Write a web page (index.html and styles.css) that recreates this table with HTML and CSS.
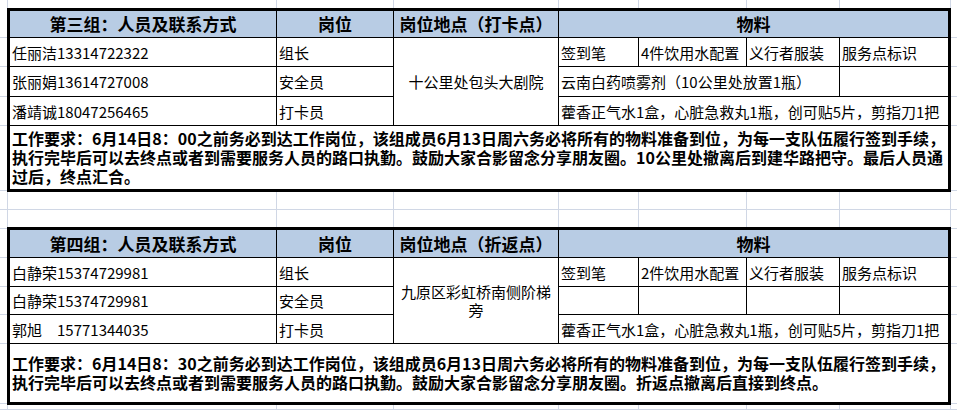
FILE: index.html
```html
<!DOCTYPE html>
<html lang="zh-CN">
<head>
<meta charset="utf-8">
<title>分组表</title>
<link rel="stylesheet" href="styles.css">
</head>
<body>
<div class="sheet">
  <div class="tbl tbl-a">
    <div class="c h">第三组：人员及联系方式</div>
    <div class="c h">岗位</div>
    <div class="c h">岗位地点（打卡点）</div>
    <div class="c h span4">物料</div>

    <div class="c">任丽洁13314722322</div>
    <div class="c">组长</div>
    <div class="c loc rows3">十公里处包头大剧院</div>
    <div class="c">签到笔</div>
    <div class="c">4件饮用水配置</div>
    <div class="c">义行者服装</div>
    <div class="c">服务点标识</div>

    <div class="c">张丽娟13614727008</div>
    <div class="c">安全员</div>
    <div class="c span3">云南白药喷雾剂（10公里处放置1瓶）</div>
    <div class="c"></div>

    <div class="c">潘靖诚18047256465</div>
    <div class="c">打卡员</div>
    <div class="c span4">藿香正气水1盒，心脏急救丸1瓶，创可贴5片，剪指刀1把</div>

    <div class="c req span7">
      <p class="line">工作要求：6月14日8：00之前务必到达工作岗位，该组成员6月13日周六务必将所有的物料准备到位，为每一支队伍履行签到手续，</p>
      <p class="line">执行完毕后可以去终点或者到需要服务人员的路口执勤。鼓励大家合影留念分享朋友圈。10公里处撤离后到建华路把守。最后人员通</p>
      <p class="line">过后，终点汇合。</p>
    </div>
  </div>

  <div class="tbl tbl-b">
    <div class="c h">第四组：人员及联系方式</div>
    <div class="c h">岗位</div>
    <div class="c h">岗位地点（折返点）</div>
    <div class="c h span4">物料</div>

    <div class="c">白静荣15374729981</div>
    <div class="c">组长</div>
    <div class="c loc rows3">九原区彩虹桥南侧阶梯<br>旁</div>
    <div class="c">签到笔</div>
    <div class="c">2件饮用水配置</div>
    <div class="c">义行者服装</div>
    <div class="c">服务点标识</div>

    <div class="c">白静荣15374729981</div>
    <div class="c">安全员</div>
    <div class="c"></div>
    <div class="c"></div>
    <div class="c"></div>
    <div class="c"></div>

    <div class="c">郭旭&ensp;&ensp;15771344035</div>
    <div class="c">打卡员</div>
    <div class="c span4">藿香正气水1盒，心脏急救丸1瓶，创可贴5片，剪指刀1把</div>

    <div class="c req span7">
      <p class="line">工作要求：6月14日8：30之前务必到达工作岗位，该组成员6月13日周六务必将所有的物料准备到位，为每一支队伍履行签到手续，</p>
      <p class="line">执行完毕后可以去终点或者到需要服务人员的路口执勤。鼓励大家合影留念分享朋友圈。折返点撤离后直接到终点。</p>
    </div>
  </div>
</div>
</body>
</html>
```

FILE: styles.css
```css
html, body {
  margin: 0;
  padding: 0;
  background: #ffffff;
}

.sheet {
  width: 957px;
  height: 410px;
  box-sizing: border-box;
  padding: 8px 0 0 7px;
  overflow: hidden;
  font-family: "Noto Sans CJK SC", "Noto Sans", sans-serif;
  color: #000;
  background-color: #ffffff;
  background-image:
    linear-gradient(#d0d7e5, #d0d7e5),
    linear-gradient(#d0d7e5, #d0d7e5),
    linear-gradient(#d0d7e5, #d0d7e5),
    linear-gradient(#d0d7e5, #d0d7e5),
    linear-gradient(#d0d7e5, #d0d7e5),
    linear-gradient(#d0d7e5, #d0d7e5),
    linear-gradient(#d0d7e5, #d0d7e5),
    linear-gradient(#d0d7e5, #d0d7e5),
    linear-gradient(#d0d7e5, #d0d7e5),
    linear-gradient(#d0d7e5, #d0d7e5),
    linear-gradient(#d0d7e5, #d0d7e5),
    linear-gradient(#d0d7e5, #d0d7e5),
    linear-gradient(#d0d7e5, #d0d7e5),
    linear-gradient(#d0d7e5, #d0d7e5),
    linear-gradient(#d0d7e5, #d0d7e5),
    linear-gradient(#d0d7e5, #d0d7e5),
    linear-gradient(#d0d7e5, #d0d7e5),
    linear-gradient(#d0d7e5, #d0d7e5),
    linear-gradient(#d0d7e5, #d0d7e5),
    linear-gradient(#d0d7e5, #d0d7e5),
    linear-gradient(#d0d7e5, #d0d7e5);
  background-repeat: no-repeat;
  background-size:
    1px 100%, 1px 100%, 1px 100%, 1px 100%, 1px 100%, 1px 100%, 1px 100%, 1px 100%,
    100% 1px, 100% 1px, 100% 1px, 100% 1px, 100% 1px, 100% 1px, 100% 1px,
    100% 1px, 100% 1px, 100% 1px, 100% 1px, 100% 1px, 100% 1px;
  background-position:
    7px 0, 276px 0, 393px 0, 558px 0, 638px 0, 746px 0, 839px 0, 950px 0,
    0 37px, 0 66px, 0 96px, 0 125px, 0 190px, 0 209px, 0 228px,
    0 257px, 0 286px, 0 314px, 0 343px, 0 403px, 0 409px;
}

.tbl {
  display: grid;
  width: 938px;
  border: 3px solid #000;
  background: #000;
  gap: 1px;
  grid-template-columns: 266px 116px 164px 79px 107px 92px 108px;
}

.tbl-a {
  grid-template-rows: 26px 28px 29px 28px 63px;
}

.tbl-b {
  margin-top: 35px;
  grid-template-rows: 27px 28px 27px 28px 58px;
}

.c {
  background: #ffffff;
  display: flex;
  align-items: center;
  padding: 1px 2px 0 2px;
  font-size: 15px;
  line-height: 18px;
  white-space: nowrap;
  overflow: hidden;
}

.h {
  background: #b8cce4;
  justify-content: center;
  font-weight: bold;
  font-size: 17px;
  padding: 0;
}

.span3 { grid-column: span 3; }
.span4 { grid-column: span 4; }
.span7 { grid-column: span 7; }
.rows3 { grid-row: span 3; }

.loc {
  justify-content: center;
  text-align: center;
  white-space: normal;
  line-height: 18px;
}

.req {
  flex-direction: column;
  align-items: flex-start;
  justify-content: center;
  padding: 0 0 0 2px;
  font-weight: bold;
  font-size: 16px;
  line-height: 19px;
  overflow: visible;
}

.line {
  margin: 0;
  white-space: nowrap;
}
```
